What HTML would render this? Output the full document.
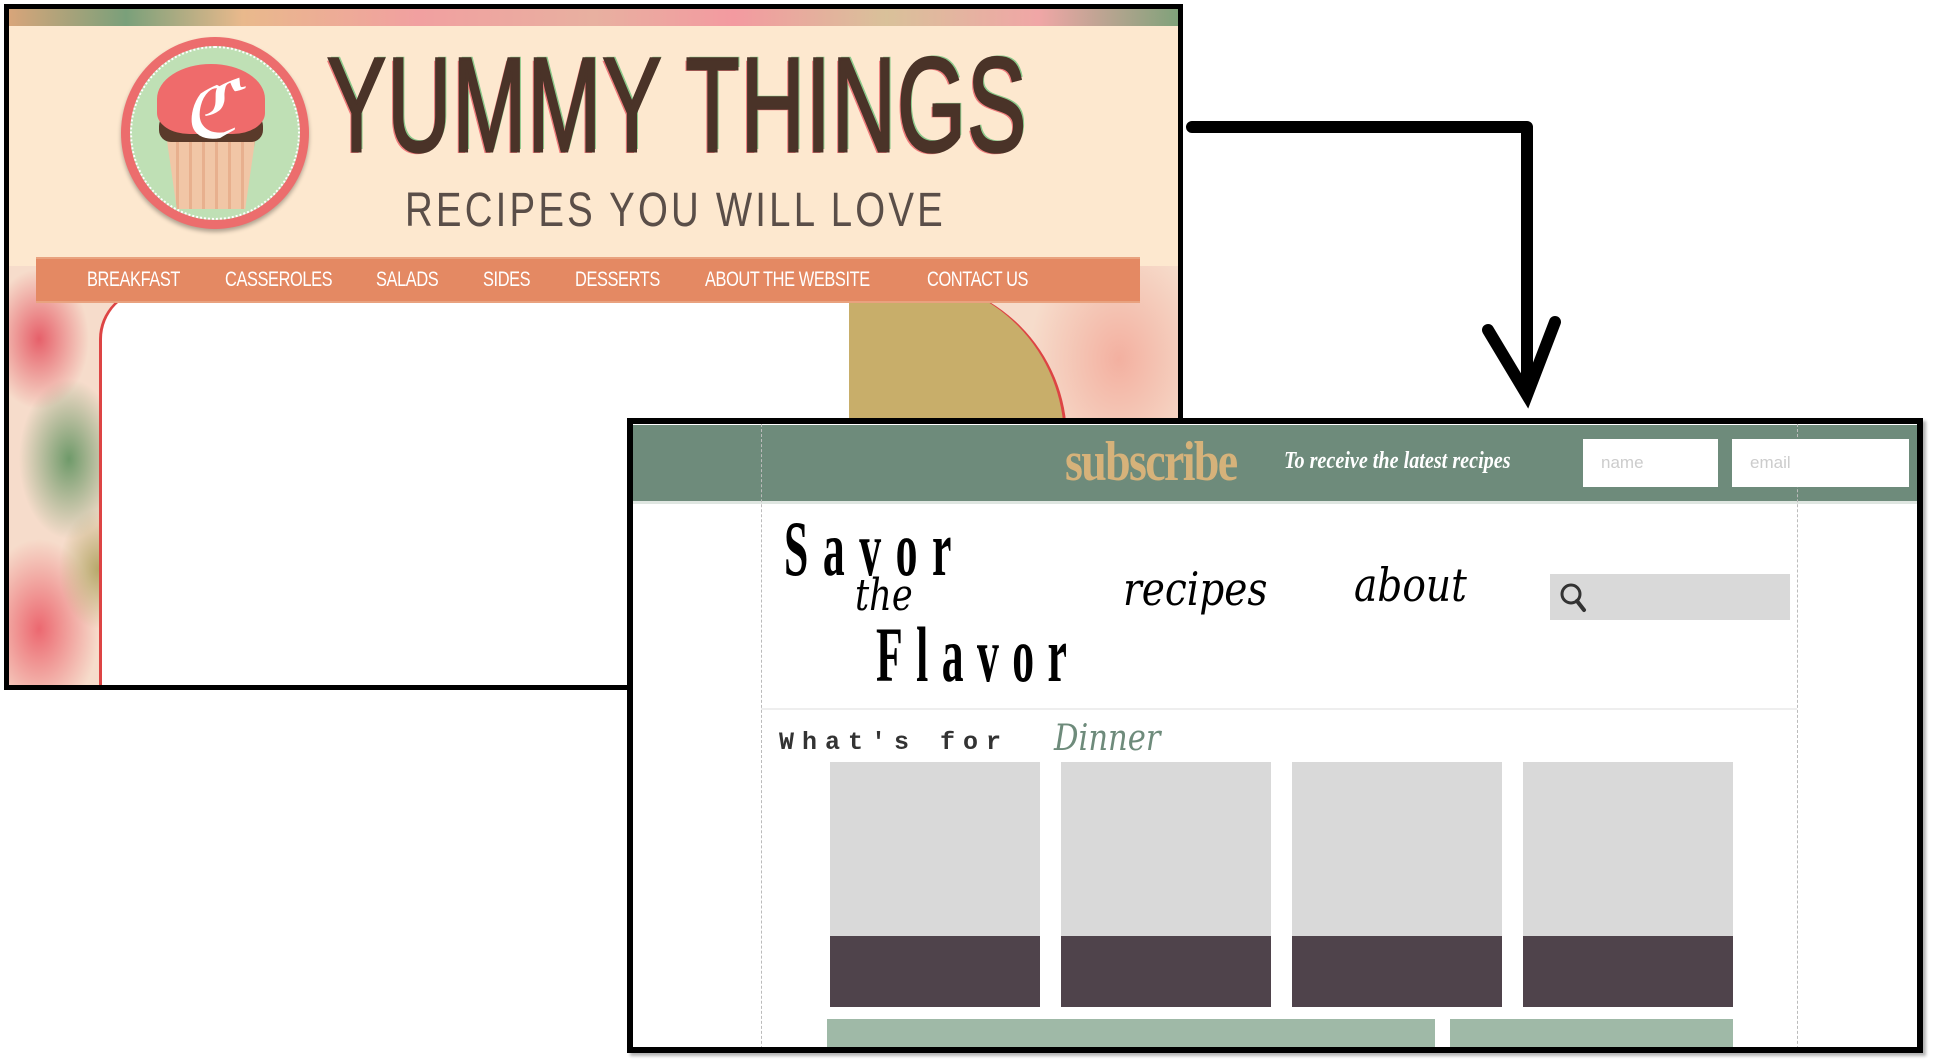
<!DOCTYPE html>
<html><head><meta charset="utf-8"><style>
*{margin:0;padding:0;box-sizing:border-box}
body{width:1935px;height:1064px;background:#fff;position:relative;overflow:hidden;font-family:"Liberation Sans",sans-serif}
.a{position:absolute}
.nav span{position:absolute;transform:scaleX(.78);transform-origin:left;letter-spacing:-.5px}
</style></head><body>

<div class="a" style="left:4px;top:4px;width:1179px;height:686px;border:5px solid #000;overflow:hidden;background:
radial-gradient(ellipse 50px 70px at 30px 330px,#e6606a 0,rgba(230,96,106,0) 100%),
radial-gradient(ellipse 50px 80px at 60px 450px,#6f9a6a 0,rgba(111,154,106,0) 100%),
radial-gradient(ellipse 40px 60px at 90px 560px,#b6a86a 0,rgba(182,168,106,0) 100%),
radial-gradient(ellipse 60px 90px at 30px 620px,#ec6870 0,rgba(236,104,112,0) 100%),
radial-gradient(ellipse 90px 120px at 1110px 350px,#f3b0a0 0,rgba(243,176,160,0) 100%),
radial-gradient(ellipse 60px 90px at 1140px 560px,#f2a0a0 0,rgba(242,160,160,0) 100%),
#f6dccb;">
  <div class="a" style="left:0;top:0;width:1170px;height:20px;background:linear-gradient(90deg,#d8a57a,#7aa07a 10%,#e9b98c 20%,#f1a0a0 35%,#e8b0a0 50%,#f39aa0 62%,#d9c19a 75%,#f0a6a6 88%,#7fa27a 100%)"></div>
  <div class="a" style="left:0;top:17px;width:1170px;height:240px;background:#fde8cf"></div>
  <div class="a" style="left:112px;top:28px;width:188px;height:192px;border-radius:50%;background:#ec6d6d;box-shadow:0 3px 4px rgba(0,0,0,.3)"></div>
  <div class="a" style="left:121px;top:37px;width:170px;height:174px;border-radius:50%;background:#bfe0b5;border:2px dotted #fff"></div>
  <div class="a" style="left:157px;top:125px;width:90px;height:75px;background:repeating-linear-gradient(90deg,#f1c6a6 0 10px,#e8b08e 10px 13px);clip-path:polygon(0 0,100% 0,88% 100%,12% 100%)"></div>
  <div class="a" style="left:150px;top:105px;width:104px;height:28px;border-radius:12px;background:#5a3a2a"></div>
  <div class="a" style="left:148px;top:55px;width:108px;height:70px;border-radius:50% 50% 30% 30%;background:#ef6b6b"></div>
  <div class="a" style="left:172px;top:62px;font:italic 80px 'Liberation Serif',serif;color:#fff;line-height:1">ℭ</div>
  <div class="a" style="left:318px;top:30px;font:134px 'Liberation Sans',sans-serif;color:#4a3328;letter-spacing:2px;line-height:1;text-shadow:-3px 2px 0 #ee7b7b,3px -2px 0 #8bc98a;transform:scaleX(.66);transform-origin:left;white-space:nowrap;-webkit-text-stroke:3px #4a3328">YUMMY THINGS</div>
  <div class="a" style="left:396px;top:178px;font:48px 'Liberation Sans',sans-serif;color:#5a4e48;letter-spacing:4px;line-height:1;white-space:nowrap;transform:scaleX(.8);transform-origin:left">RECIPES YOU WILL LOVE</div>
  <div class="a" style="left:830px;top:270px;width:228px;height:420px;background:#c8ae6a;border-radius:0 160px 0 0;border-right:3px solid #d44"></div>
  <div class="a" style="left:90px;top:280px;width:750px;height:420px;background:#fff;border-radius:50px 0 0 0;border-left:3px solid #d44;border-top:2px solid #d44"></div>
  <div class="a" style="left:27px;top:250px;width:1104px;height:42px;background:#e48963;box-shadow:0 2px 0 #e9a27f,0 -2px 0 #e9a27f"></div>
  <div class="a nav" style="left:0;top:261px;width:1130px;font:21px 'Liberation Sans',sans-serif;color:#fff;white-space:nowrap;line-height:20px">
    <span style="left:78px">BREAKFAST</span>
    <span style="left:216px">CASSEROLES</span>
    <span style="left:367px">SALADS</span>
    <span style="left:474px">SIDES</span>
    <span style="left:566px">DESSERTS</span>
    <span style="left:696px">ABOUT THE WEBSITE</span>
    <span style="left:918px">CONTACT US</span>
  </div>
</div>

<svg class="a" style="left:0;top:0" width="1935" height="1064">
  <path d="M1192 127 H1527 V392" fill="none" stroke="#000" stroke-width="12" stroke-linecap="round" stroke-linejoin="round"/>
  <path d="M1488 330 L1527 395 L1555 322" fill="none" stroke="#000" stroke-width="12" stroke-linecap="round"/>
</svg>

<div class="a" style="left:627px;top:418px;width:1296px;height:635px;border:6px solid #000;background:#fff;overflow:hidden;box-shadow:3px 3px 3px rgba(0,0,0,.3)">
  <div class="a" style="left:0;top:1px;width:1290px;height:79px;background:#6e8b7b;border-bottom:3px solid #dfe6e1"></div>
  <div class="a" style="left:128px;top:0;height:640px;border-left:1px dashed #bbb"></div>
  <div class="a" style="left:1164px;top:0;height:640px;border-left:1px dashed #bbb"></div>
  <div class="a" style="left:432px;top:10px;font:bold 56px 'Liberation Serif',serif;color:#d6b27a;line-height:1;letter-spacing:-2px;transform:scaleX(.82);transform-origin:left;white-space:nowrap">subscribe</div>
  <div class="a" style="left:651px;top:24px;font:italic bold 24px 'Liberation Serif',serif;color:#fff;transform:scaleX(.84);transform-origin:left;white-space:nowrap">To receive the latest recipes</div>
  <div class="a" style="left:950px;top:15px;width:135px;height:48px;background:#fff;color:#ccc;font:17px 'Liberation Sans',sans-serif;padding:14px 0 0 18px">name</div>
  <div class="a" style="left:1099px;top:15px;width:177px;height:48px;background:#fff;color:#ccc;font:17px 'Liberation Sans',sans-serif;padding:14px 0 0 18px">email</div>

  <div class="a" style="left:151px;top:86px;font:bold 78px 'Liberation Serif',serif;color:#000;letter-spacing:26px;transform:scaleX(.56);transform-origin:left;white-space:nowrap;line-height:1">Savor</div>
  <div class="a" style="left:222px;top:150px;font:italic 44px 'DejaVu Serif',serif;color:#000;line-height:1;transform:scaleX(.8);transform-origin:left">the</div>
  <div class="a" style="left:243px;top:192px;font:bold 78px 'Liberation Serif',serif;color:#000;letter-spacing:24px;transform:scaleX(.56);transform-origin:left;white-space:nowrap;line-height:1">Flavor</div>
  <div class="a" style="left:490px;top:142px;font:italic 46px 'DejaVu Serif',serif;color:#000;line-height:1;transform:scaleX(.85);transform-origin:left">recipes</div>
  <div class="a" style="left:721px;top:138px;font:italic 46px 'DejaVu Serif',serif;color:#000;line-height:1;transform:scaleX(.85);transform-origin:left">about</div>
  <div class="a" style="left:917px;top:150px;width:240px;height:46px;background:#d9d9d9"></div>
  <svg class="a" style="left:925px;top:156px" width="34" height="34"><circle cx="13" cy="14" r="9" fill="none" stroke="#333" stroke-width="3"/><path d="M19 21 L26 30" stroke="#333" stroke-width="4" stroke-linecap="round"/></svg>
  <div class="a" style="left:128px;top:284px;width:1036px;border-top:2px solid #eee"></div>
  <div class="a" style="left:146px;top:306px;font:bold 25px 'Liberation Mono',monospace;color:#333;letter-spacing:8px;white-space:nowrap;line-height:1">What's for</div>
  <div class="a" style="left:421px;top:297px;font:italic 36px 'DejaVu Serif',serif;color:#6e8b7b;line-height:1;transform:scaleX(.85);transform-origin:left">Dinner</div>

  <div class="a" style="left:197px;top:338px;width:210px;height:174px;background:#d9d9d9"></div>
  <div class="a" style="left:428px;top:338px;width:210px;height:174px;background:#d9d9d9"></div>
  <div class="a" style="left:659px;top:338px;width:210px;height:174px;background:#d9d9d9"></div>
  <div class="a" style="left:890px;top:338px;width:210px;height:174px;background:#d9d9d9"></div>
  <div class="a" style="left:197px;top:512px;width:210px;height:71px;background:#4f434b"></div>
  <div class="a" style="left:428px;top:512px;width:210px;height:71px;background:#4f434b"></div>
  <div class="a" style="left:659px;top:512px;width:210px;height:71px;background:#4f434b"></div>
  <div class="a" style="left:890px;top:512px;width:210px;height:71px;background:#4f434b"></div>
  <div class="a" style="left:194px;top:595px;width:608px;height:40px;background:#9fb9a7"></div>
  <div class="a" style="left:817px;top:595px;width:283px;height:40px;background:#9fb9a7"></div>
</div>
</body></html>
